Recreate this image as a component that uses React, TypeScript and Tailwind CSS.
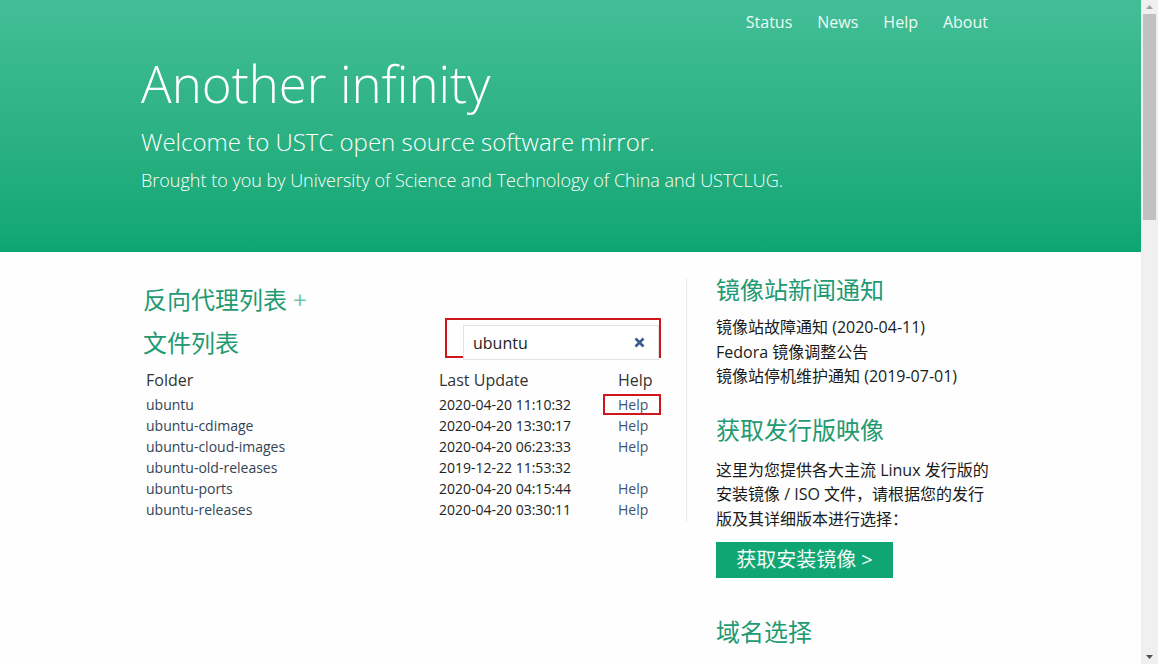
import React from "react";

const rows = [
  { name: "ubuntu", date: "2020-04-20 11:10:32", help: true, boxed: true },
  { name: "ubuntu-cdimage", date: "2020-04-20 13:30:17", help: true },
  { name: "ubuntu-cloud-images", date: "2020-04-20 06:23:33", help: true },
  { name: "ubuntu-old-releases", date: "2019-12-22 11:53:32", help: false },
  { name: "ubuntu-ports", date: "2020-04-20 04:15:44", help: true },
  { name: "ubuntu-releases", date: "2020-04-20 03:30:11", help: true },
];

const font = "font-['Open_Sans','Noto_Sans_CJK_SC',sans-serif]";

export default function App() {
  return (
    <div className={`flex h-[664px] w-[1158px] overflow-hidden ${font}`}>
      <div className="flex w-[1141px] flex-col bg-[#fdfefd]">
        <header className="h-[252px] bg-gradient-to-b from-[#42be96] to-[#0ba673] text-white">
          <nav className="flex justify-end gap-[25px] pr-[153px] pt-[10px] text-[16px] leading-[24px] text-[#eefaf5]">
            <span>Status</span>
            <span>News</span>
            <span>Help</span>
            <span>About</span>
          </nav>
          <div className="pl-[141px]">
            <h1 className="mt-[17px] text-[51px] font-light leading-[64px]">Another infinity</h1>
            <p className="mt-[10px] text-[24px] font-light leading-[34px]">Welcome to USTC open source software mirror.</p>
            <p className="mt-[8px] text-[18px] font-light leading-[26px]">
              Brought to you by University of Science and Technology of China and USTCLUG.
            </p>
          </div>
        </header>
        <main className="flex pl-[141px]">
          <section className="w-[545px] pt-[32px]">
            <h2 className="pl-[2px] text-[24px] leading-[32px] text-[#1f9a72]">
              反向代理列表<span className="ml-[6px] text-[#6cc6a6]">+</span>
            </h2>
            <div className="mt-[10px] flex items-start justify-between pr-[25px]">
              <h2 className="mt-[1px] pl-[2px] text-[24px] leading-[32px] text-[#1f9a72]">文件列表</h2>
              <div className="-mt-[8px] h-[40px] w-[216px] border-2 border-[#d0161d] pl-[16px] pt-[5px]">
                <div className="flex h-[35px] items-center justify-between border border-[#e3e3e3] bg-white pl-[9px] pr-[13px]">
                  <span className="text-[16px] text-[#222]">ubuntu</span>
                  <svg width="11" height="11" viewBox="0 0 11 11">
                    <path d="M1.5 1.5 L9.5 9.5 M9.5 1.5 L1.5 9.5" stroke="#3d5a8c" strokeWidth="2.6" />
                  </svg>
                </div>
              </div>
            </div>
            <div className="mt-[9px] pl-[5px] pr-[20px]">
              <div className="flex h-[24px] items-center text-[16px] text-[#333]">
                <span className="w-[293px]">Folder</span>
                <span className="w-[179px]">Last Update</span>
                <span>Help</span>
              </div>
              <div className="mt-[2px]">
                {rows.map((r) => (
                  <div key={r.name} className="flex h-[21px] items-center text-[14px] text-[#2f3b48]">
                    <span className="w-[293px] text-[#345]">{r.name}</span>
                    <span className="w-[164px] text-[#222]">{r.date}</span>
                    {r.help ? (
                      r.boxed ? (
                        <span className="flex h-[21px] w-[58px] items-center border-2 border-[#d0161d] pl-[13px] text-[#3e5570]">
                          Help
                        </span>
                      ) : (
                        <span className="pl-[15px] text-[#3e5570]">Help</span>
                      )
                    ) : null}
                  </div>
                ))}
              </div>
            </div>
          </section>
          <aside className="mt-[26px] flex h-[244px] border-l border-[#e8ece9]">
            <div className="-mt-[1px] pl-[29px]">
              <h2 className="text-[24px] leading-[26px] text-[#1f9a72]">镜像站新闻通知</h2>
              <ul className="mt-[12px] text-[16px] leading-[24.5px] text-[#1a1a1a]">
                <li>镜像站故障通知 (2020-04-11)</li>
                <li>Fedora 镜像调整公告</li>
                <li>镜像站停机维护通知 (2019-07-01)</li>
              </ul>
              <h2 className="mt-[28px] text-[24px] leading-[26px] text-[#1f9a72]">获取发行版映像</h2>
              <p className="mt-[15px] w-[280px] text-[16px] leading-[24.5px] text-[#1a1a1a]">
                这里为您提供各大主流 Linux 发行版的安装镜像 / ISO 文件，请根据您的发行版及其详细版本进行选择：
              </p>
              <div className="mt-[11px] flex h-[36px] w-[177px] items-center justify-center bg-[#10a674] text-[20px] text-[#f2fbf7]">
                获取安装镜像 &gt;
              </div>
              <h2 className="mt-[41px] text-[24px] leading-[26px] text-[#1f9a72]">域名选择</h2>
            </div>
          </aside>
        </main>
      </div>
      <div className="flex w-[17px] flex-col bg-[#f0f0f0]">
        <div className="flex h-[14px] items-center justify-center">
          <svg width="7" height="4" viewBox="0 0 7 4"><path d="M3.5 0 L7 4 L0 4 Z" fill="#a3a3a3" /></svg>
        </div>
        <div className="mx-[2px] h-[206px] bg-[#c1c1c1]" />
        <div className="flex-1" />
        <div className="flex h-[14px] items-center justify-center">
          <svg width="7" height="4" viewBox="0 0 7 4"><path d="M0 0 L7 0 L3.5 4 Z" fill="#505050" /></svg>
        </div>
      </div>
    </div>
  );
}
